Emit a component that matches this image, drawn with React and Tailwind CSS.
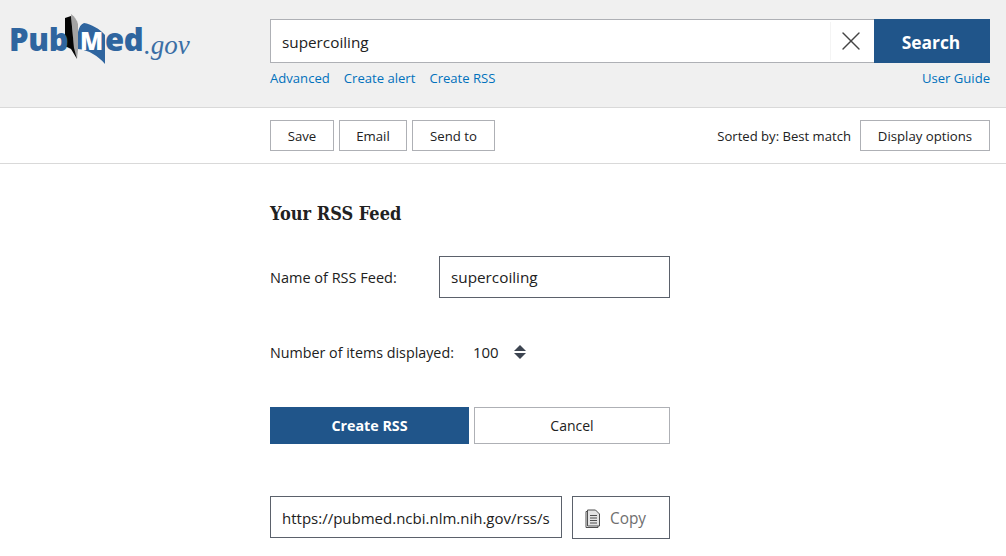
import { X } from "lucide-react";

const ui = "font-['Open_Sans','Noto_Sans',sans-serif]";

function Logo() {
  return (
    <div className="relative w-[200px] h-[70px] shrink-0">
      <svg className="absolute left-0 top-0" width="200" height="70" viewBox="0 0 200 70">
        <path d="M71 14 C75 17 77 20 78 24 L78 50 L77 59 L74 50 Z" fill="#a3a3a3" />
        <path d="M65 18 L71 16 L74 48 L77 59 L71 49 L65 46 Z" fill="#050505" />
        <path d="M78 32 C79 27 81 24 84 23 C91 24 100 29 105 35 L105 64 C98 56 89 50 78 49 Z" fill="#2f659f" />
        <text x="80" y="50" fontSize="24" fontWeight="800" fill="#fff" fontFamily="Open Sans, sans-serif">M</text>
      </svg>
      <span className="absolute left-[9px] top-[20px] text-[31px] leading-[38px] font-extrabold text-[#2f659f] tracking-[-0.3px] font-['Open_Sans',sans-serif]">Pub</span>
      <span className="absolute left-[105px] top-[20px] text-[31px] leading-[38px] font-extrabold text-[#2f659f] tracking-[-0.5px] font-['Open_Sans',sans-serif]">ed</span>
      <span className="absolute left-[144px] top-[30px] text-[27px] leading-[30px] italic text-[#3a6ea5] font-['Liberation_Serif',serif]">.gov</span>
    </div>
  );
}

function OutlineButton({ children, className = "" }) {
  return (
    <button className={`h-[31px] pt-[2px] border border-[#aeb0b5] bg-white text-[13.2px] text-[#212121] flex items-center justify-center ${className}`}>
      {children}
    </button>
  );
}

function CopyIcon() {
  return (
    <svg width="18" height="20" viewBox="0 0 18 20" fill="none" stroke="#4f4f4f" strokeWidth="1">
      <path d="M3.5 2.5 H2 V18.5 H14 V17" />
      <path d="M3.5 1 H11.5 L15.5 5 V17 H3.5 Z" fill="#e4e4e4" />
      <path d="M6 6.5 H13 M6 9 H13 M6 11.5 H13 M6 14 H13" />
    </svg>
  );
}

export default function App() {
  return (
    <div className={`w-[1006px] h-[556px] overflow-hidden bg-white text-[#212121] ${ui}`}>
      <header className="h-[108px] bg-[#f0f0f0] border-b border-[#d9d9d9] flex pr-4">
        <div className="w-[270px] shrink-0">
          <Logo />
        </div>
        <div className="flex-1 pt-[19px]">
          <div className="flex h-[44px]">
            <div className="flex-1 flex items-center justify-between bg-white border border-r-0 border-[#aeb0b5]">
              <span className="pl-[11px] pt-[2px] text-[15.3px]">supercoiling</span>
              <div className="w-[44px] h-[38px] pr-[3px] flex items-center justify-center border-l border-[#f4f4f4]">
                <X size={32} strokeWidth={1} color="#444" />
              </div>
            </div>
            <button className="w-[116px] pt-[2px] pr-[2px] bg-[#20558a] text-white text-[17.4px] font-bold">Search</button>
          </div>
          <div className="flex justify-between mt-[6px] text-[13.1px] leading-[19px] text-[#0071bc]">
            <div className="flex gap-[14px]">
              <a>Advanced</a>
              <a>Create alert</a>
              <a>Create RSS</a>
            </div>
            <a>User Guide</a>
          </div>
        </div>
      </header>

      <div className="h-[56px] border-b border-[#d9d9d9] flex items-center justify-between pl-[270px] pr-4">
        <div className="flex gap-[5px]">
          <OutlineButton className="w-[64px]">Save</OutlineButton>
          <OutlineButton className="w-[68px]">Email</OutlineButton>
          <OutlineButton className="w-[83px]">Send to</OutlineButton>
        </div>
        <div className="flex items-center gap-[9px]">
          <span className="pt-[2px] text-[13.1px]">Sorted by: Best match</span>
          <OutlineButton className="w-[130px]">Display options</OutlineButton>
        </div>
      </div>

      <main className="pl-[270px] w-[670px] box-content">
        <h1 className="mt-[36px] text-[18px] leading-[28px] font-bold text-[#212121] font-['DejaVu_Serif_Condensed','DejaVu_Serif',serif]">Your RSS Feed</h1>

        <div className="flex items-center mt-[28px]">
          <label className="w-[169px] pt-[2px] text-[14.5px]">Name of RSS Feed:</label>
          <div className="w-[231px] h-[42px] border border-[#5b616b] flex items-center pl-[11px] text-[15.3px]">supercoiling</div>
        </div>

        <div className="flex items-center mt-[42px] h-[24px]">
          <span className="pt-[1px] text-[14.3px]">Number of items displayed:</span>
          <span className="ml-[19px] pt-[1px] text-[15px]">100</span>
          <span className="ml-[15px] flex flex-col items-center gap-[2px]">
            <span className="w-0 h-0 border-x-[6.5px] border-x-transparent border-b-[6px] border-b-[#3d4551]" />
            <span className="w-0 h-0 border-x-[6.5px] border-x-transparent border-t-[6px] border-t-[#3d4551]" />
          </span>
        </div>

        <div className="flex gap-[5px] mt-[43px]">
          <button className="w-[199px] h-[37px] bg-[#20558a] text-white text-[14.3px] font-bold">Create RSS</button>
          <button className="w-[196px] h-[37px] border border-[#aeb0b5] text-[14px]">Cancel</button>
        </div>

        <div className="flex gap-[10px] mt-[52px] items-start">
          <div className="w-[292px] h-[42px] border border-[#5b616b] pl-[11px] pr-[11px] text-[15px] leading-[42px]">
            <div className="overflow-hidden whitespace-nowrap">https://pubmed.ncbi.nlm.nih.gov/rss/s</div>
          </div>
          <button className="w-[98px] h-[43px] pt-[2px] border border-[#5b616b] flex items-center pl-[11px] gap-[8px] text-[15.4px] text-[#6f6f6f]">
            <CopyIcon />
            Copy
          </button>
        </div>
      </main>
    </div>
  );
}
